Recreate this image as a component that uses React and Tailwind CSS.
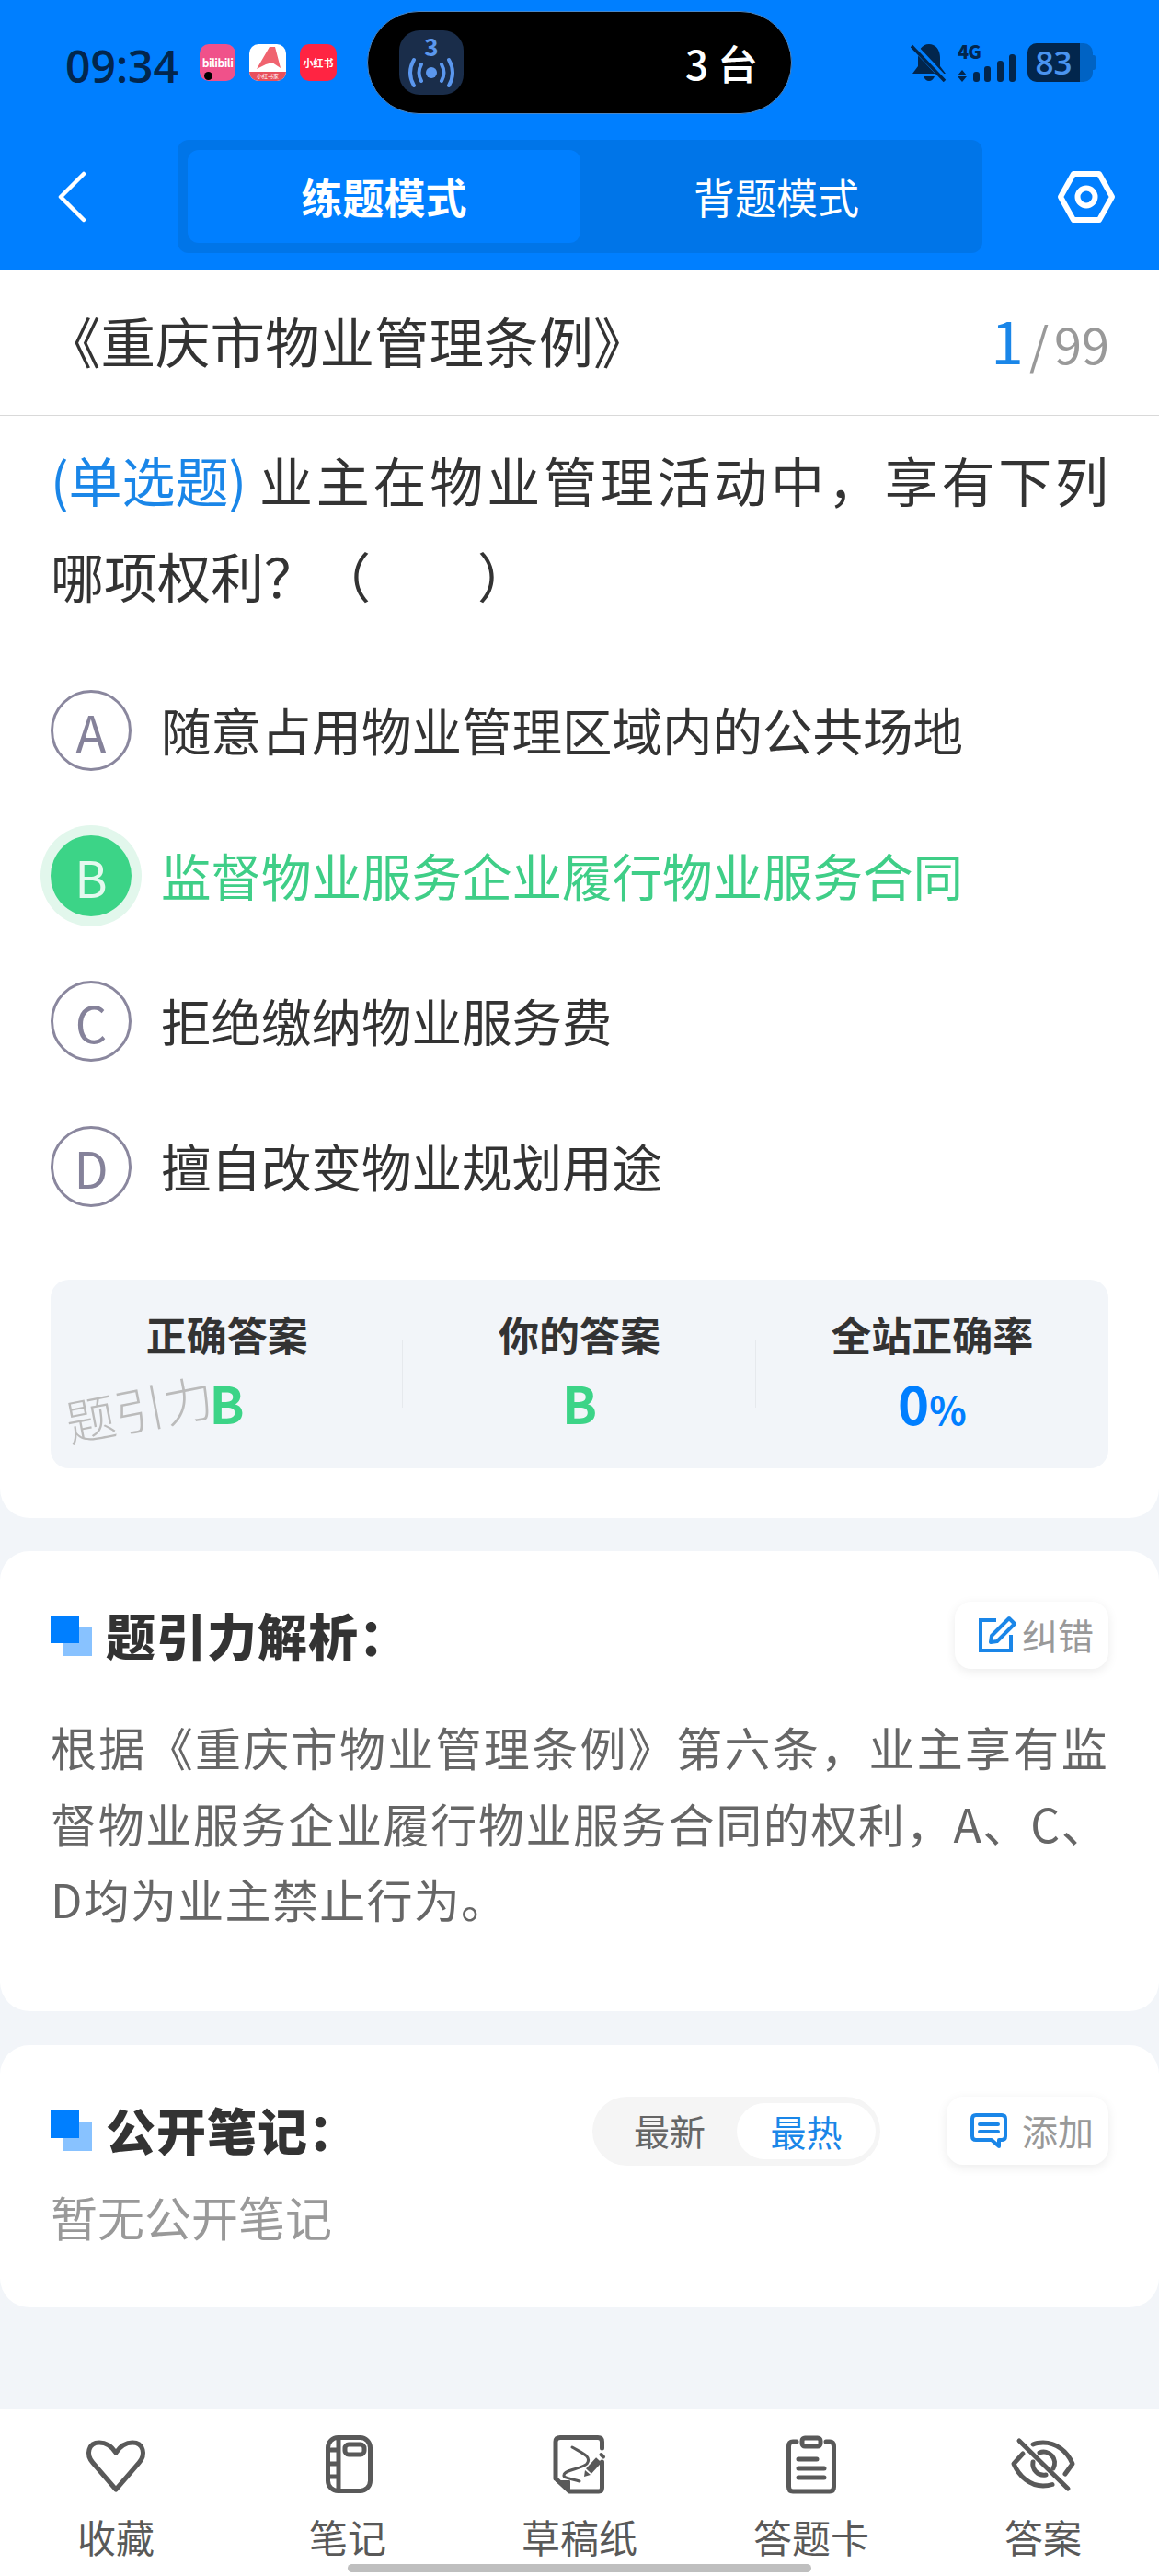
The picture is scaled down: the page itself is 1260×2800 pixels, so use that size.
import React from "react";

const Section = ({ children }) => (
  <div className="flex items-center">
    <div className="relative w-[45px] h-[44px] shrink-0">
      <div className="absolute left-[14px] top-[13px] w-[31px] h-[31px] bg-[#88c2ff]" />
      <div className="absolute left-0 top-0 w-[31px] h-[30px] bg-[#007fff]" />
    </div>
    <div className="ml-[15px] -mt-[2px] text-[54px] font-black text-[#333] tracking-[1px] leading-none">{children}</div>
  </div>
);

const Option = ({ letter, text, active }) => (
  <div className="flex items-center h-[158px]">
    {active ? (
      <div className="w-[88px] h-[88px] rounded-full bg-[#3cd487] ring-[11px] ring-[#e2f7ec] flex items-center justify-center text-[54px] text-[#e4f9ee] shrink-0">{letter}</div>
    ) : (
      <div className="w-[88px] h-[88px] rounded-full border-[3px] border-[#8a879e] flex items-center justify-center text-[54px] text-[#85829a] shrink-0">{letter}</div>
    )}
    <div className={`ml-[32px] -mt-[3px] text-[54.5px] ${active ? "text-[#3fce87]" : "text-[#333]"}`}>{text}</div>
  </div>
);

const Stat = ({ title, children, divider }) => (
  <div className="flex-1 relative flex flex-col items-center pt-[31px]">
    {divider && <div className="absolute right-0 top-[66px] w-[1px] h-[73px] bg-[#e6e9ed]" />}
    <div className="text-[44px] font-bold text-[#333] leading-[56px]">{title}</div>
    {children}
  </div>
);

const Tab = ({ label, children }) => (
  <div className="flex flex-col items-center pt-[24px]">
    <svg width="72" height="72" viewBox="0 0 72 72" fill="none" stroke="#595959" strokeWidth="5" strokeLinecap="round" strokeLinejoin="round">
      {children}
    </svg>
    <div className="mt-[18px] text-[42px] leading-[50px] text-[#595959]">{label}</div>
  </div>
);

export default function App() {
  return (
    <div className="relative w-[1260px] h-[2800px] overflow-hidden bg-[#f2f5f9] flex flex-col font-['Noto_Sans_CJK_SC','Noto_Sans',sans-serif]">
      {/* header */}
      <div className="h-[294px] bg-[#007fff] shrink-0">
        <div className="flex h-[152px] pt-[12px]">
          <div className="w-[399px] flex items-start pt-[36px]">
            <div className="ml-[71px] w-[146px] text-[48px] leading-[48px] font-semibold text-[#02264d] font-['Open_Sans',sans-serif]">09:34</div>
            <div className="w-[39px] h-[40px] rounded-[10px] bg-[#f0518a] relative flex items-center justify-center">
              <span className="text-[12px] leading-none font-bold text-white tracking-[-0.5px]">bilibili</span>
              <span className="absolute left-[5px] bottom-[1px] w-[9px] h-[9px] rounded-full bg-black" />
            </div>
            <div className="ml-[15px] w-[40px] h-[40px] rounded-[10px] bg-white overflow-hidden flex flex-col justify-between">
              <svg width="40" height="30" viewBox="0 0 40 30"><path d="M22 3 L28 3 L34 26 L25 20 L18 22 L8 27 Z" fill="#f0636f" /></svg>
              <div className="h-[10px] bg-[#e8505c] text-[6px] leading-[10px] text-center text-white whitespace-nowrap">小红书家</div>
            </div>
            <div className="ml-[15px] w-[40px] h-[40px] rounded-[10px] bg-[#ff2442] flex items-center justify-center text-[11px] font-bold text-white whitespace-nowrap">小红书</div>
          </div>
          <div className="w-[462px] h-[112px] rounded-[56px] bg-black border border-[#4a86c5] flex items-center pl-[34px] pr-[36px] justify-between">
            <div className="w-[70px] h-[70px] rounded-[22px] bg-[#1a2d4a] flex flex-col items-center">
              <div className="text-[26px] leading-[24px] mt-[5px] font-bold text-[#5b97ee]">3</div>
              <svg width="52" height="34" viewBox="0 0 52 34" fill="none" stroke="#5b97ee" strokeWidth="4" strokeLinecap="round">
                <circle cx="26" cy="17" r="6" fill="#5b97ee" stroke="none" />
                <path d="M15 8 Q10 17 15 26 M37 8 Q42 17 37 26 M7 3 Q-1 17 7 31 M45 3 Q53 17 45 31" />
              </svg>
            </div>
            <div className="text-[44px] font-medium text-white leading-none">3 台</div>
          </div>
          <div className="flex-1 flex items-start pt-[35px] pl-[129px]">
            <svg width="40" height="42" viewBox="0 0 40 42" className="shrink-0">
              <path d="M20 1 C12 1 8 8 8 16 V25 L2 33 H38 L32 25 V16 C32 8 28 1 20 1 Z" fill="#02264d" />
              <path d="M14 36 H26 Q24 41 20 41 Q16 41 14 36 Z" fill="#02264d" />
              <path d="M3 3 L37 39" stroke="#007fff" strokeWidth="7" />
              <path d="M1 3 L37 41" stroke="#02264d" strokeWidth="3.5" />
            </svg>
            <div className="relative ml-[11px] w-[65px] h-[42px] shrink-0">
              <div className="text-[20px] leading-[18px] font-black text-[#02264d] tracking-[-1px]">4G</div>
              <svg width="65" height="30" viewBox="0 0 65 30" className="absolute left-0 top-[12px]">
                <path d="M5 17 L10 23 H0 Z M5 30 L10 24 H0 Z" fill="#02264d" />
                <rect x="17" y="19" width="7" height="11" rx="3" fill="#02264d" />
                <rect x="29" y="13" width="7" height="17" rx="3" fill="#02264d" />
                <rect x="43" y="7" width="7" height="23" rx="3" fill="#02264d" />
                <rect x="56" y="0" width="7" height="30" rx="3" fill="#02264d" />
              </svg>
            </div>
            <div className="ml-[11px] w-[71px] h-[42px] rounded-[10px] bg-[#0063c4] flex shrink-0">
              <div className="w-[57px] h-[42px] rounded-l-[10px] bg-[#02264d] text-[35px] leading-[42px] font-semibold text-[#4a94f0] text-center font-['Open_Sans',sans-serif]">83</div>
            </div>
            <div className="w-[3px] h-[16px] mt-[13px] bg-[#0063c4] rounded-r-[2px]" />
          </div>
        </div>
        <div className="flex items-center h-[123px]">
          <div className="w-[193px] pl-[62px]">
            <svg width="32" height="56" viewBox="0 0 32 56" fill="none" stroke="#fff" strokeWidth="4.5" strokeLinecap="round" strokeLinejoin="round">
              <path d="M29 3 L4 28 L29 53" />
            </svg>
          </div>
          <div className="w-[875px] h-[123px] rounded-[12px] bg-[#0075e8] p-[11px] flex">
            <div className="w-[427px] rounded-[12px] bg-[#007fff] flex items-center justify-center text-[45px] font-bold text-white">练题模式</div>
            <div className="flex-1 flex items-center justify-center text-[45px] text-white">背题模式</div>
          </div>
          <div className="flex-1 pl-[81px]">
            <svg width="64" height="58" viewBox="0 0 64 58" fill="none" stroke="#fff" strokeLinejoin="round">
              <path d="M18 4 H46 L60 29 L46 54 H18 L4 29 Z" strokeWidth="6" />
              <circle cx="32" cy="29" r="9.5" strokeWidth="6" />
            </svg>
          </div>
        </div>
      </div>

      {/* question card */}
      <div className="h-[1356px] bg-white rounded-b-[32px] shrink-0">
        <div className="h-[158px] border-b border-[#d9d9d9] flex items-center justify-between pl-[55px] pr-[54px]">
          <div className="text-[59.5px] text-[#333] -ml-[5px] -mt-[6px]">《重庆市物业管理条例》</div>
          <div className="flex items-baseline -mt-[10px]">
            <span className="text-[64px] text-[#1a86e8]">1</span>
            <span className="text-[54px] text-[#999] ml-[6px]">/</span>
            <span className="text-[54px] text-[#999] ml-[6px]">99</span>
          </div>
        </div>
        <div className="px-[55px]">
          <p className="text-[58px] leading-[104px] text-[#333] text-justify mt-[17px]">
            <span className="inline-block mr-[10px] text-[#1a86e8]">(单选题)</span>业主在物业管理活动中，享有下列哪项权利？（　　）
          </p>
          <div className="mt-[38px] flex flex-col">
            <Option letter="A" text="随意占用物业管理区域内的公共场地" />
            <Option letter="B" text="监督物业服务企业履行物业服务合同" active />
            <Option letter="C" text="拒绝缴纳物业服务费" />
            <Option letter="D" text="擅自改变物业规划用途" />
          </div>
          <div className="relative mt-[44px] h-[205px] rounded-[20px] bg-[#f2f5f9] flex">
            <Stat title="正确答案" divider>
              <div className="text-[56px] font-bold text-[#3cd487] leading-[70px] mt-[11px]">B</div>
            </Stat>
            <Stat title="你的答案" divider>
              <div className="text-[56px] font-bold text-[#3cd487] leading-[70px] mt-[11px]">B</div>
            </Stat>
            <Stat title="全站正确率">
              <div className="flex items-baseline text-[#007fff] font-bold mt-[11px] leading-[70px]">
                <span className="text-[58px]">0</span>
                <span className="text-[42px] font-bold">%</span>
              </div>
            </Stat>
            <div className="absolute left-[15px] top-[112px] text-[54px] leading-none font-light text-[#bbbbbb] -rotate-[11deg] whitespace-nowrap">题引力</div>
          </div>
        </div>
      </div>

      {/* analysis */}
      <div className="mt-[36px] h-[500px] bg-white rounded-[32px] px-[55px] pt-[55px] shrink-0">
        <div className="flex items-center justify-between h-[73px]">
          <Section>题引力解析：</Section>
          <div className="w-[167px] h-[73px] rounded-[18px] bg-white shadow-[0_3px_12px_rgba(0,0,0,0.08)] flex items-center justify-end pr-[16px]">
            <svg width="44" height="44" viewBox="0 0 44 44" fill="none" stroke="#1a86e8" strokeWidth="4" className="mr-[5px]">
              <path d="M21 5 H4 V38 H37 V21" />
              <path d="M35 3 L41 9 L22 28 L15 29 L16 22 Z" strokeLinejoin="round" />
            </svg>
            <span className="text-[39px] text-[#999] leading-none -mt-[2px]">纠错</span>
          </div>
        </div>
        <p className="mt-[43px] text-[50px] tracking-[1.3px] leading-[82.5px] text-[#666] text-justify">
          根据《重庆市物业管理条例》第六条，业主享有监督物业服务企业履行物业服务合同的权利，A、C、D均为业主禁止行为。
        </p>
      </div>

      {/* notes */}
      <div className="mt-[37px] h-[285px] bg-white rounded-[32px] px-[55px] pt-[56px] shrink-0">
        <div className="flex items-center h-[74px]">
          <Section>公开笔记：</Section>
          <div className="ml-auto w-[313px] h-[75px] rounded-[38px] bg-[#f5f5f5] flex items-center pl-[45px] pr-[5px]">
            <span className="text-[39px] text-[#666] leading-none -mt-[2px]">最新</span>
            <div className="ml-auto w-[151px] h-[61px] rounded-[31px] bg-white flex items-center justify-center text-[39px] text-[#1a86e8]">最热</div>
          </div>
          <div className="ml-[72px] w-[176px] h-[74px] rounded-[18px] bg-white shadow-[0_3px_12px_rgba(0,0,0,0.08)] flex items-center justify-end pr-[16px]">
            <svg width="42" height="40" viewBox="0 0 42 40" fill="none" stroke="#1a86e8" strokeWidth="4" strokeLinejoin="round" strokeLinecap="round" className="mr-[15px]">
              <path d="M7 3 H35 Q39 3 39 7 V26 Q39 30 35 30 H32 V37 L24 30 H7 Q3 30 3 26 V7 Q3 3 7 3 Z" />
              <path d="M11 13 H31 M11 21 H31" />
            </svg>
            <span className="text-[39px] text-[#999] leading-none -mt-[2px]">添加</span>
          </div>
        </div>
        <div className="mt-[26px] text-[51px] leading-[60px] text-[#999]">暂无公开笔记</div>
      </div>

      {/* bottom bar */}
      <div className="mt-auto h-[182px] bg-white grid grid-cols-5 shrink-0">
        <Tab label="收藏">
          <path d="M36 64 L11 35 C3 26 6 13 18 13 C26 13 32 18 36 24 C40 18 46 13 54 13 C66 13 69 26 61 35 Z" />
        </Tab>
        <Tab label="笔记">
          <rect x="14.5" y="7.5" width="46" height="58" rx="11" />
          <path d="M26 8 V65 M15 21 H26 M15 36 H26 M15 50 H26" strokeLinecap="butt" />
          <rect x="33" y="15" width="21" height="11" rx="4" />
        </Tab>
        <Tab label="草稿纸">
          <path d="M10 52 V12 Q10 7.5 15 7.5 H56 Q60.5 7.5 60.5 12 V19 M60.5 34 V62 Q60.5 66 57 66 H25 L10 52" />
          <path d="M11 55 H25 V65 Z" fill="#595959" strokeWidth="2" />
          <path d="M28 18 C38 24 50 28 44 36 C38 42 20 42 19 48 C18 52 28 52 36 55" strokeWidth="3" />
          <path d="M57 32 L46 44" strokeWidth="8" strokeLinecap="butt" />
          <path d="M41 50 L42 43 L48 48 Z" fill="#595959" stroke="none" />
          <path d="M59.5 26 L62 28.5" strokeWidth="4" />
        </Tab>
        <Tab label="答题卡">
          <path d="M20 12 H16 Q11.5 12 11.5 17 V61 Q11.5 66 16 66 H56 Q60.5 66 60.5 61 V17 Q60.5 12 56 12 H52" />
          <rect x="26" y="8" width="20" height="9" rx="3" />
          <path d="M22 31 H42 M22 41 H50 M22 51 H50" />
        </Tab>
        <Tab label="答案">
          <path d="M10 11 L63 63" />
          <path d="M14 25 L4 36 C10 50 22 60 36 60 C40 60 43 59.5 46 58.5" />
          <path d="M25 15 C28 13.5 32 13 36 13 C50 13 62 22 68 36 L60 47" />
          <path d="M32 24 A12 12 0 0 1 47 41" />
          <path d="M25 34 A12 12 0 0 0 39 48" />
        </Tab>
      </div>
      <div className="absolute left-[378px] top-[2787px] w-[504px] h-[9px] rounded-full bg-[#bfbfbf]" />
    </div>
  );
}
